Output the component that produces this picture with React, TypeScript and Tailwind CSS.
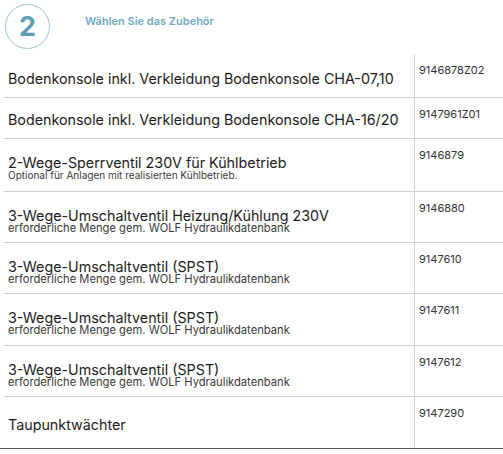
type Row = {
  title: string;
  sub?: string;
  small?: boolean;
  code: string;
  h: string;
  pt: string;
};

const rows: Row[] = [
  { title: "Bodenkonsole inkl. Verkleidung Bodenkonsole CHA-07,10", code: "9146878Z02", h: "h-[44px]", pt: "pt-[17px]" },
  { title: "Bodenkonsole inkl. Verkleidung Bodenkonsole CHA-16/20", code: "9147961Z01", h: "h-[41px]", pt: "pt-[14px]" },
  {
    title: "2-Wege-Sperrventil 230V für Kühlbetrieb",
    sub: "Optional für Anlagen mit realisierten Kühlbetrieb.",
    small: true,
    code: "9146879",
    h: "h-[53px]",
    pt: "pt-[16px]",
  },
  {
    title: "3-Wege-Umschaltventil Heizung/Kühlung 230V",
    sub: "erforderliche Menge gem. WOLF Hydraulikdatenbank",
    code: "9146880",
    h: "h-[51px]",
    pt: "pt-[16px]",
  },
  {
    title: "3-Wege-Umschaltventil (SPST)",
    sub: "erforderliche Menge gem. WOLF Hydraulikdatenbank",
    code: "9147610",
    h: "h-[51px]",
    pt: "pt-[16px]",
  },
  {
    title: "3-Wege-Umschaltventil (SPST)",
    sub: "erforderliche Menge gem. WOLF Hydraulikdatenbank",
    code: "9147611",
    h: "h-[52px]",
    pt: "pt-[16px]",
  },
  {
    title: "3-Wege-Umschaltventil (SPST)",
    sub: "erforderliche Menge gem. WOLF Hydraulikdatenbank",
    code: "9147612",
    h: "h-[51px]",
    pt: "pt-[16px]",
  },
  { title: "Taupunktwächter", code: "9147290", h: "h-[51px]", pt: "pt-[20px]" },
];

export default function App() {
  return (
    <div className="w-[503px] h-[454px] bg-white font-['Inter',sans-serif] text-[#1c1c1c] overflow-hidden">
      {/* Step header */}
      <div className="h-[54px] flex items-start pl-[5px] pt-[4px]">
        <div className="w-[45px] h-[45px] rounded-full border border-[#9cc4d2] flex items-center justify-center">
          <span className="text-[27px] font-bold leading-none text-[#5e9db7]">2</span>
        </div>
        <p className="ml-[35px] mt-[9px] text-[11px] font-semibold text-[#72a9c2]">
          Wählen Sie das Zubehör
        </p>
      </div>

      {/* Accessory table */}
      <div className="ml-[4px]">
        {rows.map((r, i) => (
          <div
            key={r.code}
            className={`flex ${r.h} ${i < rows.length - 1 ? "border-b border-[#cfcfcf]" : ""}`}
          >
            <div className={`w-[411px] shrink-0 pl-[4px] ${r.pt} border-r border-[#cfcfcf]`}>
              <p className="text-[14.3px] leading-[15px] whitespace-nowrap">{r.title}</p>
              {r.sub && (
                <p
                  className={`leading-[11px] text-[#3a3a3a] whitespace-nowrap ${r.small ? "text-[10px]" : "text-[11.2px]"}`}
                >
                  {r.sub}
                </p>
              )}
            </div>
            <div className="flex-1 pl-[4px] pt-[9px] text-[11px] leading-[14px] text-[#333]">
              {r.code}
            </div>
          </div>
        ))}
      </div>
      <div className="h-px bg-[#5a5a5a]" />
    </div>
  );
}
